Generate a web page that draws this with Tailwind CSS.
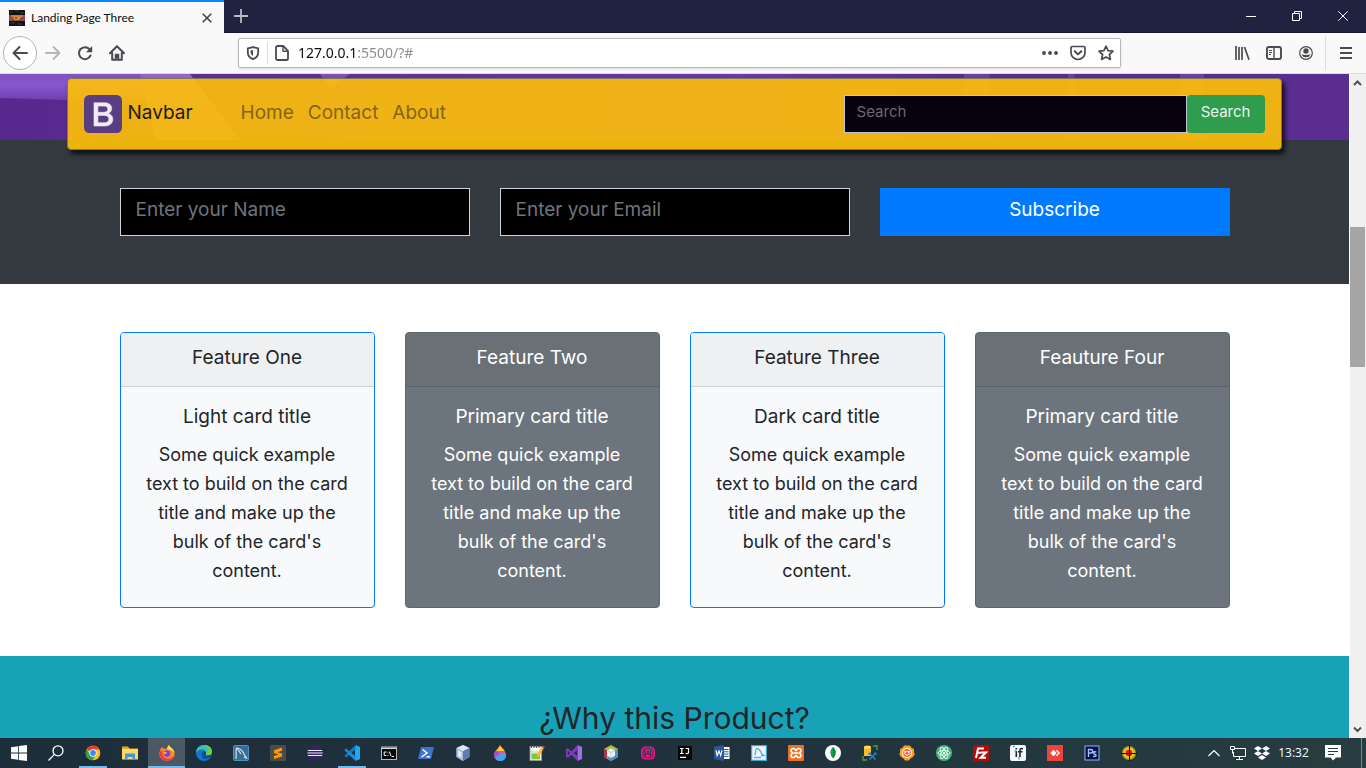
<!DOCTYPE html>
<html lang="en">
<head>
<meta charset="utf-8">
<meta name="viewport" content="width=device-width, initial-scale=1">
<title>Landing Page Three</title>
<script src="https://cdn.jsdelivr.net/npm/@tailwindcss/browser@4"></script>
</head>
<body class="h-screen flex flex-col overflow-hidden bg-white font-['Noto_Sans',sans-serif]">

<!-- Tab strip -->
<header class="shrink-0">
  <div class="h-[33px] flex bg-[#202340] border-b border-[#14162b]">
    <div class="w-[224px] h-[33px] flex items-center pl-[9px] pr-2 bg-[#f9f9fa] border-t-2 border-[#0a84ff]">
      <svg class="size-4 mr-[6px]" viewBox="0 0 16 16" aria-hidden="true"><rect width="16" height="16" fill="#151216"/><path d="M0 5h16v6H0z" fill="#8d4b4b"/><path d="M2 5h12v2H2z" fill="#b9776c"/><path d="M5 6h3l-1 2 3-2 2 1-2 3H6L4 8z" fill="#e58e1e"/><path d="M6 7l2 1-1 1z" fill="#2b1511"/><path d="M1 2h3M6 1h4M11 3h4M1 13h5M8 14h5" stroke="#3c3a3c"/></svg>
      <span class="grow text-xs font-['Lato',sans-serif] text-[#0c0c0d]">Landing Page Three</span>
      <button class="size-[18px] grid place-items-center" aria-label="Close tab"><svg class="size-[10px]" viewBox="0 0 10 10"><path d="M.7.7l8.6 8.6M9.3.7L.7 9.3" stroke="#3d3d42" stroke-width="1.5"/></svg></button>
    </div>
    <button class="w-[34px] grid place-items-center" aria-label="New tab"><svg class="size-[14px]" viewBox="0 0 14 14"><path d="M7 0v14M0 7h14" stroke="#b9bac6" stroke-width="1.8"/></svg></button>
    <div class="ml-auto flex">
      <button class="w-[46px] grid place-items-center" aria-label="Minimize"><svg class="size-[10px]" viewBox="0 0 10 10"><path d="M0 5.500h10" stroke="#fff"/></svg></button>
      <button class="w-[46px] grid place-items-center" aria-label="Restore"><svg class="size-[10px]" viewBox="0 0 10 10"><path d="M.5 2.500h7v7h-7zM2.500 2.500v-2h7v7h-2" fill="none" stroke="#fff"/></svg></button>
      <button class="w-[46px] grid place-items-center" aria-label="Close"><svg class="size-[10px]" viewBox="0 0 10 10"><path d="M.3.3l9.400 9.400M9.700.3L.3 9.700" stroke="#fff"/></svg></button>
    </div>
  </div>

  <!-- Toolbar -->
  <div class="h-[41px] flex items-center bg-[#f9f9fa] border-b border-[#dcdcdd] text-[#4a4a4f]">
    <button class="ml-[3px] size-[34px] rounded-full border border-[#b4b4b5] bg-white grid place-items-center" aria-label="Back"><svg class="size-4" viewBox="0 0 16 16" fill="none" stroke="currentColor" stroke-width="2" stroke-linecap="round" stroke-linejoin="round"><path d="M15 8H1.500M7.500 2l-6 6 6 6"/></svg></button>
    <button class="w-8 grid place-items-center text-[#b5b5b7]" aria-label="Forward"><svg class="size-4" viewBox="0 0 16 16" fill="none" stroke="currentColor" stroke-width="2" stroke-linecap="round" stroke-linejoin="round"><path d="M1 8h13.500M8.500 2l6 6-6 6"/></svg></button>
    <button class="w-8 grid place-items-center" aria-label="Reload"><svg class="size-4" viewBox="0 0 16 16" fill="none" stroke="currentColor" stroke-width="2" stroke-linecap="round"><path d="M13.500 10.500A6 6 0 1 1 12.500 4.200"/><path d="M15.200 1v6.200H9z" fill="currentColor" stroke="none"/></svg></button>
    <button class="w-8 grid place-items-center" aria-label="Home"><svg class="size-4" viewBox="0 0 16 16" fill="none" stroke="currentColor" stroke-width="2" stroke-linecap="round" stroke-linejoin="round"><path d="M1 8.200L8 1.300l7 6.900M3.200 8v6.800h9.600V8"/><path d="M6.500 14.500v-5h3v5M8 10v3" stroke-width="1.500"/></svg></button>
    <form class="ml-[105px] mr-[105px] grow h-[30px] flex items-center rounded-xs border border-[#b9b9ba] bg-white shadow-sm" onsubmit="return false">
      <span class="w-[29px] grid place-items-center border-r border-[#dcdcdd] h-[22px]"><svg class="size-[14px]" viewBox="0 0 14 14" fill="none" stroke="currentColor"><path d="M7 1.100L12.200 2.300v3.900c0 3.300-1.800 5.700-5.200 7C3.600 11.900 1.800 9.500 1.800 6.200V2.300z" stroke-width="1.800" stroke-linejoin="round"/><path d="M7 4v6C5.400 9 4.600 7.600 4.600 6V4.400z" fill="currentColor" stroke="none"/></svg></span>
      <svg class="ml-[6px] size-4" viewBox="0 0 16 16" fill="none" stroke="currentColor" stroke-width="1.800" stroke-linejoin="round"><path d="M3.800 1h5.400l4.800 4.800v7.500c0 1-.7 1.700-1.700 1.700H3.700C2.700 15 2 14.300 2 13.300V2.700C2 1.700 2.700 1 3.800 1z"/><path d="M9 1.200v5h4.800" stroke-width="1.400"/></svg>
      <input type="text" aria-label="Address" value="127.0.0.1:5500/?#" class="grow min-w-0 ml-2 text-sm outline-none text-transparent bg-clip-text bg-[linear-gradient(90deg,#0c0c0d_58px,#8a8a8d_58px)]">
      <div class="flex items-center gap-3 pr-[6px]">
        <button aria-label="Page actions"><svg class="size-4" viewBox="0 0 16 16" fill="currentColor"><circle cx="2" cy="8" r="1.900"/><circle cx="8" cy="8" r="1.900"/><circle cx="14" cy="8" r="1.900"/></svg></button>
        <button aria-label="Save to Pocket"><svg class="size-4" viewBox="0 0 16 16" fill="none" stroke="currentColor" stroke-width="2" stroke-linecap="round" stroke-linejoin="round"><path d="M2.300 1.500h11.400c.8 0 1.300.5 1.300 1.300V7.500a7 7 0 0 1-14 0V2.800c0-.8.5-1.300 1.300-1.300z" stroke-width="1.700"/><path d="M4.700 6.200L8 9.400l3.300-3.200"/></svg></button>
        <button aria-label="Bookmark this page"><svg class="size-4" viewBox="0 0 16 16" fill="none" stroke="currentColor" stroke-width="1.700" stroke-linejoin="round"><path d="M8 1.200l2.100 4.400 4.900.6-3.600 3.300 1 4.900L8 12l-4.400 2.400 1-4.900L1 6.200l4.900-.6z"/></svg></button>
      </div>
    </form>
    <button class="w-8 grid place-items-center" aria-label="Library"><svg class="size-4" viewBox="0 0 16 16" stroke="currentColor" stroke-width="1.700"><path d="M2 1v14M5 2v13M8 2v13M10.500 2L15 14.700"/></svg></button>
    <button class="w-8 grid place-items-center" aria-label="Sidebars"><svg class="size-4" viewBox="0 0 16 16" fill="none" stroke="currentColor"><rect x="1" y="2" width="14" height="12" rx="2" stroke-width="1.900"/><path d="M8 2v12" stroke-width="1.400"/><path d="M3 5.500h3M3 7.500h3M3 9.500h2"/></svg></button>
    <button class="w-8 grid place-items-center" aria-label="Account"><svg class="size-4" viewBox="0 0 16 16"><circle cx="8" cy="8" r="6.300" fill="none" stroke="currentColor" stroke-width="1.200"/><circle cx="8" cy="6" r="2.700" fill="currentColor"/><path d="M3.500 9.500c1.500-.4 2 .6 4.500.6s3-1 4.500-.6A5 5 0 0 1 3.500 9.500z" fill="currentColor"/></svg></button>
    <div class="ml-[3px] w-px h-[34px] bg-[#dcdcdd]"></div>
    <button class="w-10 grid place-items-center" aria-label="Menu"><svg class="w-3 h-4" viewBox="0 0 12 16" stroke="currentColor" stroke-width="2"><path d="M0 3h12M0 8h12M0 13h12"/></svg></button>
  </div>
</header>

<div class="grow min-h-0 flex">
  <!-- Page -->
  <main class="grow min-w-0 relative overflow-hidden font-['Inter',sans-serif] text-[#212529] text-lg leading-[29px]">
    <div class="h-[66px] bg-[#5c2d91] overflow-hidden" aria-hidden="true">
      <svg class="w-full h-full" viewBox="0 0 1349 66" preserveAspectRatio="none">
        <defs><linearGradient id="sheen" x1="0" y1="0" x2="0" y2="1"><stop offset="0" stop-color="#8450bf"/><stop offset=".35" stop-color="#8458cd"/><stop offset="1" stop-color="#6b3aa6"/></linearGradient>
        <linearGradient id="base" x1="0" x2="1" y1="0" y2="0"><stop offset="0" stop-color="#59288e"/><stop offset=".55" stop-color="#6a38a8"/><stop offset=".7" stop-color="#5c2d91"/><stop offset="1" stop-color="#5c2d91"/></linearGradient></defs>
        <rect width="1349" height="66" fill="url(#base)"/>
        <path d="M0 0h190l20 30L0 24z" fill="url(#sheen)"/>
        <path d="M140 0h50l50 66h-85z" fill="#a070d2" opacity=".6"/>
        <path d="M964 0h25l4 66h-30zM1068 0h7v66h-7zM1180 0h24v66h-24z" fill="#7d50c4" opacity=".5"/>
        <path d="M320 0h30l-20 14z" fill="#a070d2" opacity=".5"/>
      </svg>
    </div>

    <nav class="absolute z-10 top-1 inset-x-[5%] flex items-center px-4 py-4 rounded-sm border border-[#7c7758] bg-[#ffc107]/90 shadow-[3px_4px_5px_rgba(0,0,0,0.75)]">
      <a href="#" class="flex items-center gap-[5px] text-[19px] text-[#1e1a0c]">
        <svg class="size-[38px]" viewBox="0 0 38 38" aria-hidden="true"><rect width="38" height="38" rx="5.500" fill="#5a3e82"/><path fill-rule="evenodd" fill="#f2ebf6" stroke="#f2ebf6" stroke-width=".6" d="M10 7.800h10.800c4.300 0 6.900 2.200 6.900 5.800 0 2.500-1.600 4.300-3.600 4.900 2.700.5 4.700 2.700 4.700 5.600 0 4.300-3 6.900-8 6.900H10zm3.900 3.300v6.200h5.300c3 0 4.600-1.100 4.600-3.200 0-1.900-1.300-3-3.800-3zm0 9.300v7.300h6.400c3 0 4.600-1.300 4.600-3.700s-1.700-3.600-4.900-3.600z"/></svg>
        <span class="pb-1">Navbar</span>
      </a>
      <div class="ml-12 pb-1 flex gap-[14px] text-[19px] text-[#846512]">
        <a href="#">Home</a><a href="#">Contact</a><a href="#">About</a>
      </div>
      <form class="ml-auto flex w-[421px] text-[15px]" onsubmit="return false">
        <input type="search" aria-label="Search" placeholder="Search" class="grow min-w-0 h-[38px] px-3 pb-[5px] bg-[#08020e] border border-[#c4c3d0] text-gray-300 placeholder:text-[#686974] outline-none">
        <button class="h-[38px] w-[78px] pb-[5px] rounded-sm bg-[#2f9c4e] text-[#eef4ee]">Search</button>
      </form>
    </nav>

    <section class="bg-[#343a40] py-12 px-4">
      <form class="max-w-[1110px] mx-auto grid grid-cols-3 gap-[30px] text-[19px]" onsubmit="return false">
        <input type="text" aria-label="Enter your Name" placeholder="Enter your Name" class="min-w-0 h-12 px-[15px] pb-[5px] bg-black border border-[#ced4da] text-white placeholder:text-[#6c757d] outline-none">
        <input type="email" aria-label="Enter your Email" placeholder="Enter your Email" class="min-w-0 h-12 px-[15px] pb-[5px] bg-black border border-[#ced4da] text-white placeholder:text-[#6c757d] outline-none">
        <button class="h-12 pb-[5px] bg-[#007bff] text-white">Subscribe</button>
      </form>
    </section>

    <section class="bg-white py-12 px-4">
      <div class="max-w-[1110px] mx-auto grid grid-cols-4 gap-[30px] text-center">
        <article class="rounded-sm border border-[#007bff] bg-[#f8f9fa] overflow-hidden">
          <h4 class="pt-[10px] pb-[14px] text-[19px] bg-[#eff0f1] border-b border-[#cfd0d1]">Feature One</h4>
          <div class="px-5 pt-[18px] pb-[22px]"><h5 class="mb-3 text-[19px] leading-[23px]">Light card title</h5><p>Some quick example text to build on the card title and make up the bulk of the card's content.</p></div>
        </article>
        <article class="rounded-sm border border-[#5f676e] bg-[#6c757d] text-white overflow-hidden">
          <h4 class="pt-[10px] pb-[14px] text-[19px] bg-[#697177] border-b border-[#5b6268]">Feature Two</h4>
          <div class="px-5 pt-[18px] pb-[22px]"><h5 class="mb-3 text-[19px] leading-[23px]">Primary card title</h5><p>Some quick example text to build on the card title and make up the bulk of the card's content.</p></div>
        </article>
        <article class="rounded-sm border border-[#007bff] bg-[#f8f9fa] overflow-hidden">
          <h4 class="pt-[10px] pb-[14px] text-[19px] bg-[#eff0f1] border-b border-[#cfd0d1]">Feature Three</h4>
          <div class="px-5 pt-[18px] pb-[22px]"><h5 class="mb-3 text-[19px] leading-[23px]">Dark card title</h5><p>Some quick example text to build on the card title and make up the bulk of the card's content.</p></div>
        </article>
        <article class="rounded-sm border border-[#5f676e] bg-[#6c757d] text-white overflow-hidden">
          <h4 class="pt-[10px] pb-[14px] text-[19px] bg-[#697177] border-b border-[#5b6268]">Feauture Four</h4>
          <div class="px-5 pt-[18px] pb-[22px]"><h5 class="mb-3 text-[19px] leading-[23px]">Primary card title</h5><p>Some quick example text to build on the card title and make up the bulk of the card's content.</p></div>
        </article>
      </div>
    </section>

    <section class="bg-[#17a2b8] pt-[42px] pb-12 px-4 text-center">
      <h2 class="text-[30px] leading-10">¿Why this Product?</h2>
    </section>
  </main>

  <!-- Scroll bar -->
  <div class="w-[17px] shrink-0 flex flex-col bg-[#f0f0f0] border-l border-white" aria-hidden="true">
    <svg class="w-4 h-[17px] shrink-0" viewBox="0 0 16 17" fill="none" stroke="#505050" stroke-width="2"><path d="M4 11l3.500-3.500L11 11"/></svg>
    <div class="grow-[136]"></div>
    <div class="w-[15px] h-[140px] bg-[#a6a6a6]"></div>
    <div class="grow-[354]"></div>
    <svg class="w-4 h-[17px] shrink-0" viewBox="0 0 16 17" fill="none" stroke="#505050" stroke-width="2"><path d="M4 6.500L7.500 10 11 6.500"/></svg>
  </div>
</div>

<!-- Taskbar -->
<footer class="h-[30px] shrink-0 flex bg-linear-to-r from-[#1d2e3b] via-[#20323c] to-[#273d42] text-white">
  <div class="flex *:w-[37px] *:grid *:place-items-center *:shrink-0">
    <button aria-label="Start"><svg class="size-4" viewBox="0 0 16 16" fill="#fff"><path d="M0 2.200L7 1.200v6.400H0zM7.800 1.100L16 0v7.600H7.800zM0 8.400h7v6.400l-7-1zM7.800 8.400H16V16l-8.200-1.100z"/></svg></button>
    <button aria-label="Find"><svg class="size-4" viewBox="0 0 16 16" fill="none" stroke="#fff" stroke-width="1.300"><circle cx="10" cy="5.800" r="5"/><path d="M6.400 9.400L.5 15.500"/></svg></button>
    <button aria-label="Chrome" class="bg-[linear-gradient(#76b9ed,#76b9ed)] bg-[length:28px_2px] bg-no-repeat bg-bottom"><svg class="size-4" viewBox="0 0 16 16"><circle cx="8" cy="8" r="7.300" fill="#fbc116"/><path d="M8 8L1.700 4.300A7.300 7.300 0 0 1 14.500 4.500H8z" fill="#e04335"/><path d="M1.700 4.300A7.300 7.300 0 0 0 7.500 15.300L11 9.800 5 9.800z" fill="#2da14c"/><circle cx="8" cy="8" r="3.700" fill="#fff"/><circle cx="8" cy="8" r="2.900" fill="#4285f4"/></svg></button>
    <button aria-label="Files"><svg class="size-4" viewBox="0 0 16 16"><path d="M0 1.500h6l1.500 2H16V14H0z" fill="#e9a81d"/><path d="M0 4h16v10.500H0z" fill="#ffd766"/><path d="M3 8.500h10V15h-2.500v-3h-5v3H3z" fill="#3f97dc"/></svg></button>
    <button aria-label="Firefox" class="bg-[#4a5963] border-b-2 border-[#76b9ed]"><svg class="size-4 mt-0.5" viewBox="0 0 16 16"><path d="M3 2l2 2c1-.5 2-.5 3-.2.3-1.600 1-2.800 2-3.800 1 2.500 4.700 3.600 5.500 7.500.8 4.500-2.500 8.300-7.300 8.300C3.500 15.800.3 12.500.4 8.500.5 6 1.500 3.500 3 2z" fill="#ff8a1e"/><path d="M.5 8C1 13 4 15.800 8.200 15.800c3.600 0 6-2 7-4.800-2 2-4.200 3-7.200 2.500C4.500 13 2.500 10 3.500 5 2 5.500.8 6.500.5 8z" fill="#f4364c"/><path d="M10 0c1 2.500 4.700 3.600 5.500 7.500-1.200-1-2.500-2.500-5.500-2.700L8 4C8.300 2.300 9 1 10 0z" fill="#ffdd3f"/><circle cx="8" cy="8.500" r="3.300" fill="#7542e5"/><path d="M4 7.500c1.500-1 3-1 4 .2L6 9.500z" fill="#ffb12b"/></svg></button>
    <button aria-label="Edge"><svg class="size-4" viewBox="0 0 16 16"><circle cx="8" cy="8" r="8" fill="#1277cf"/><path d="M0 7C.5 3 4 0 8 0c4.500 0 8 3 8 6.500 0 2.500-2 4-4.500 4-1.500 0-2.300-.6-1.800-1.300C11 7 9 4.500 6 4.500 3 4.500.8 6 0 8z" fill="#35c1b5"/><path d="M9 .1C13 .5 16 3.200 16 6.500c0 2.500-2 4-4.500 4-1.500 0-2.300-.6-1.800-1.300C13 6 12 3 9 .1z" fill="#63cf55"/><path d="M5.500 9.500c0-2 1.500-3.300 3-3.300C6.500 8 7.500 12.800 14.800 12 11 15.500 5.500 14 5.500 9.500z" fill="#0c4f9b"/><path d="M8.300 6.300C7 9 9 12.300 14.800 11.800L16 9.500c-1 .8-3 1.300-4.500 1-1.500 0-2.300-.6-1.800-1.300.5-1-.2-2.300-1.400-2.900z" fill="#1f3340"/></svg></button>
    <button aria-label="MySQL Workbench"><svg class="size-4" viewBox="0 0 16 16"><rect x=".5" y=".5" width="15" height="15" rx="1" fill="#376e97" stroke="#5990b5"/><path d="M3 14C3.500 9 2.500 5 3.500 3c4 0 7 4 8 7l2.500 3.500-3-1.500M4 3l4 6" fill="none" stroke="#d4e6f1" stroke-width="1.200"/></svg></button>
    <button aria-label="Sublime Text"><svg class="size-4" viewBox="0 0 16 16"><rect width="16" height="16" rx="1" fill="#4b4b4b"/><path d="M4 5.200L12 2.500v3.200L7.500 7.300 12 8.600v2.800L4 14v-3l4.500-1.600L4 8z" fill="#ff9800"/></svg></button>
    <button aria-label="Eclipse"><svg class="size-4" viewBox="0 0 16 16"><circle cx="8" cy="8" r="7.700" fill="#33265d"/><path d="M.8 5.500h14.400M.3 8h15.400M.8 10.500h14.400" stroke="#efeaf7"/></svg></button>
    <button aria-label="Visual Studio Code" class="bg-[linear-gradient(#76b9ed,#76b9ed)] bg-[length:28px_2px] bg-no-repeat bg-bottom"><svg class="size-4" viewBox="0 0 16 16"><path d="M11.500 0L16 2v12l-4.500 2-.5-4V4z" fill="#2aa4f0"/><path d="M11.500 0v4.500L2 12.500.3 11z" fill="#0d7dc9"/><path d="M11.500 16v-4.500L2 3.500.3 5z" fill="#1590dc"/></svg></button>
    <button aria-label="Command prompt"><svg class="size-4" viewBox="0 0 16 16"><rect x=".5" y="2" width="15" height="12.500" fill="#050505" stroke="#b7b7b7"/><path d="M1 3.300h14" stroke="#d8d8d8" stroke-width="1.500"/><path d="M5.500 7H3.200v3.500h2.300M7 7.500v.8M7 10v.8M8.300 6.500l1.700 4.500M10.500 11.500H13" stroke="#fff" fill="none"/></svg></button>
    <button aria-label="PowerShell"><svg class="size-4" viewBox="0 0 16 16"><path d="M3 2h13l-3 12H0z" fill="#3d72cd"/><path d="M4.500 4.500L9 8l-5.500 4M8.500 11.800H12" fill="none" stroke="#fff" stroke-width="1.500"/></svg></button>
    <button aria-label="VirtualBox"><svg class="size-4" viewBox="0 0 16 16"><path d="M8 0l6.500 3v9L8 16l-6.500-4V3z" fill="#7c9fc9"/><path d="M8 0l6.500 3L8 6.200 1.500 3z" fill="#dbe7f4"/><path d="M1.500 3L8 6.200V16l-6.500-4z" fill="#a9c0de"/><path d="M8 6.200L14.500 3v9L8 16z" fill="#5e7eb0"/><path d="M3 5.500l3.500 1.700v5.500L3 11z" fill="#e3ecf7"/></svg></button>
    <button aria-label="Krita"><svg class="size-4" viewBox="0 0 16 16"><path d="M8 0c1 2.500 6 6 6 10a6 6 0 0 1-12 0C2 6 7 3 8 0z" fill="#ef4e9a"/><path d="M8 0c.7 2 3 3.500 4.800 6L4 6C5.500 4 7.500 2 8 0z" fill="#ffc928"/><path d="M4 9c3-2 6 1 9.900-.8C15 15 10 16 8 16c-2 0-4-1-5.200-3C5 13 6 11 4 9z" fill="#3ca8ea"/><path d="M3 6.800c4-1 6 2 3 3.500s-1 3-3 3C1.600 11.500 1.800 9 3 6.800z" fill="#a24ed0"/></svg></button>
    <button aria-label="Notepad++"><svg class="size-4" viewBox="0 0 16 16"><rect x="1" y="1.500" width="11.500" height="14" fill="#f6f6f2" stroke="#979797" stroke-width=".8"/><path d="M2.500 6h8.500v8.300H2.500z" fill="#7ec63a"/><path d="M2.500 6h8.500v2.500H2.500z" fill="#ddecc8"/><path d="M2.500 0v3M5 0v3M7.500 0v3M10 0v3" stroke="#444" stroke-width=".9"/><path d="M14 2l-5.500 9.500" stroke="#f4b82a" stroke-width="2.500"/><path d="M14 .5l2 1.300-1 1.500-2-1.200z" fill="#d13c34"/></svg></button>
    <button aria-label="Visual Studio"><svg class="size-4" viewBox="0 0 16 16"><path d="M11.500 0L16 2v12l-4.500 2z" fill="#a96bdf"/><path d="M0 4l1.800-.8L11.500 11v5L1.800 5.800v4.400L11.500 0v5L1.800 12.800 0 12z" fill="#7a3cbc" fill-rule="nonzero"/></svg></button>
    <button aria-label="NetBeans"><svg class="size-4" viewBox="0 0 16 16"><path d="M8 0l7 4v8l-7 4-7-4V4z" fill="#a8c441"/><path d="M1 4l3 1v8.500L1 12z" fill="#b5324e"/><path d="M15 4v8l-7 4-4-2.500L12 5z" fill="#4a93cf"/><path d="M8 3.500L12 5.500v5L8 13l-4-2.500v-5z" fill="#f3f6f5"/><path d="M4 5.500l4 2 4-2M8 7.500V13" stroke="#b9cbd3" fill="none"/></svg></button>
    <button aria-label="WampServer"><svg class="size-4" viewBox="0 0 16 16"><rect x="1" y="1.500" width="14" height="13" rx="4.500" fill="#f0128a"/><rect x="3" y="3.300" width="10" height="9.400" rx="3" fill="none" stroke="#243641" stroke-width=".9"/><path d="M5 5v5.500L7.800 8l2.700 2.500V5M8 5v3" stroke="#243641" stroke-width="1.200" fill="none"/></svg></button>
    <button aria-label="IntelliJ IDEA"><svg class="size-4" viewBox="0 0 16 16"><path d="M1 1h14v14H1z" fill="#090909"/><path d="M3 3.500h3.500M4.800 3.500v5M3 8.500h3.500M8.500 3.500h3v4c0 1-1.500 1.500-3 .8M3 12.300h6" stroke="#fff" stroke-width="1.200" fill="none"/></svg></button>
    <button aria-label="Word"><svg class="size-4" viewBox="0 0 16 16"><path d="M8 2h7.500v12H8z" fill="#fff"/><path d="M10 4.500h4.500M10 6.800h4.500M10 9.100h4.500M10 11.400h4.500" stroke="#2b579a"/><path d="M0 1.800L10 0v16L0 14.200z" fill="#2b579a"/><path d="M2 5.300l1.200 5.200L5 6l1.700 4.500L8 5.300" stroke="#fff" stroke-width="1.200" fill="none"/></svg></button>
    <button aria-label="MySQL"><svg class="size-4" viewBox="0 0 16 16"><rect x=".6" y=".6" width="14.800" height="14.800" fill="#eef6fa" stroke="#46a5d8" stroke-width="1.200"/><path d="M4 10C5 7 4 5 5.500 3.500c3 .5 4.500 3 5 5l2.500 2-3 .3M3 12.500h7" stroke="#6eaed2" fill="none" stroke-width="1.400"/></svg></button>
    <button aria-label="XAMPP"><svg class="size-4" viewBox="0 0 16 16"><rect width="16" height="16" rx="1" fill="#ee7023"/><path d="M5 3.500h1L8 5.500l2-2h1a2 2 0 0 1 1.500 3.300L11.500 8l1 1.200a2 2 0 0 1-1.500 3.300h-1l-2-2-2 2H5a2 2 0 0 1-1.500-3.300L4.500 8l-1-1.200A2 2 0 0 1 5 3.500zM5.500 8h5" fill="none" stroke="#fff" stroke-width="1.700"/></svg></button>
    <button aria-label="MongoDB"><svg class="size-4" viewBox="0 0 16 16"><circle cx="8" cy="8" r="8" fill="#fff"/><path d="M8 2c3.500 3.500 3.500 7.500 0 11.500C4.500 9.500 4.500 5.500 8 2z" fill="#12a150"/><path d="M8 2c3.500 3.500 3.500 7.500 0 11.500z" fill="#0b8740"/></svg></button>
    <button aria-label="Database tools"><svg class="size-4" viewBox="0 0 16 16"><path d="M2 2h7v9H2z" fill="#f7bd2b"/><ellipse cx="5.500" cy="2" rx="3.500" ry="1.500" fill="#ffd968"/><path d="M11 1h4v4M1 11v4h4" stroke="#46a546" stroke-width="1.300" fill="none"/><path d="M7.500 8.500l6 6M13.500 8.500l-6 6M6.500 9.500l2-2M12.500 7.500l2 2" stroke="#2583cf" stroke-width="1.500"/></svg></button>
    <button aria-label="Settings tool"><svg class="size-4" viewBox="0 0 16 16"><path d="M5 .5h6l1.500 2.300L15 4v3.500l.8 1.500-1.800 3-2.500 1.500L10 15.500H6L4.500 13.500 2 12 .2 9 1 7.500V4l2.500-1.200z" fill="#f5a01f"/><circle cx="8" cy="8" r="4.900" fill="#fff"/><circle cx="8" cy="8" r="3.900" fill="#ef6326"/><path d="M5.200 5.500L8 6.500l2.800-1-.5 4L8 11 5.700 9.500z" fill="#fff"/><circle cx="8" cy="8.300" r="1.500" fill="#ef6326"/></svg></button>
    <button aria-label="Atom"><svg class="size-4" viewBox="0 0 16 16"><circle cx="8" cy="8" r="8" fill="#45b27b"/><g fill="none" stroke="#e5f7ec" stroke-width="1"><ellipse cx="8" cy="8" rx="6" ry="2.400"/><ellipse cx="8" cy="8" rx="6" ry="2.400" transform="rotate(60 8 8)"/><ellipse cx="8" cy="8" rx="6" ry="2.400" transform="rotate(120 8 8)"/></g><circle cx="8" cy="8" r="1.200" fill="#fff"/></svg></button>
    <button aria-label="FileZilla"><svg class="size-4" viewBox="0 0 16 16"><rect width="16" height="16" fill="#b50a0a"/><path d="M3 13L5 3.500h6M4.200 7.800H8M8 7.500h5l-5.500 5.300H13" fill="none" stroke="#fff" stroke-width="2"/></svg></button>
    <button aria-label="Installer"><svg class="size-4" viewBox="0 0 16 16"><rect width="16" height="16" rx="2" fill="#f6f8f9"/><path d="M6.300 6v6M6.300 3v1.500M13 3.800c-2-.8-3 0-3 1.700V12M8 6.800h4.500" stroke="#23282c" stroke-width="1.600" fill="none"/><path d="M4.500 6h2M9 12v2.500M3 1.500h2" stroke="#39a9df" stroke-width="1.400"/></svg></button>
    <button aria-label="AnyDesk"><svg class="size-4" viewBox="0 0 16 16"><rect width="16" height="16" fill="#ef443b"/><path d="M6.500 4.800L9.700 8l-3.200 3.200L3.300 8z" fill="#fff"/><path d="M9.300 5.200L12.200 8l-2.900 2.800" fill="none" stroke="#fff" stroke-width="1.200"/></svg></button>
    <button aria-label="Photoshop"><svg class="size-4" viewBox="0 0 16 16"><rect x="1" y="1" width="14" height="14" fill="#0b0c4d" stroke="#8fb5e8"/><path d="M4.500 12V4.500h2.300c2.500 0 2.500 3.500 0 3.500H4.500M12.300 7c-3.500-.8-3.500 1.700-1.500 2.200 2.300.5 1.300 3-1.800 2" fill="none" stroke="#9fc4f2" stroke-width="1.400"/></svg></button>
    <button aria-label="Target tool"><svg class="size-4" viewBox="0 0 16 16"><circle cx="8" cy="8" r="7" fill="#9fa51b"/><circle cx="8" cy="8" r="5.700" fill="#f1c412"/><circle cx="8" cy="8" r="3.300" fill="#e3200f"/><path d="M8.500 0v16M0 8.500h16" stroke="#080808"/></svg></button>
  </div>
  <div class="ml-auto flex items-center">
    <button class="w-6 grid place-items-center" aria-label="Hidden icons"><svg class="w-3 h-2" viewBox="0 0 12 8" fill="none" stroke="#fff" stroke-width="1.200"><path d="M.5 7L6 1.500 11.500 7"/></svg></button>
    <button class="w-6 grid place-items-center" aria-label="Network"><svg class="size-4" viewBox="0 0 16 16" fill="none" stroke="#fff"><path d="M4.500 3.500h11v8h-12V7M9.500 11.500v3M6 14.500h7M.5 1.500h4v3h-4zM2.500 4.500v4"/></svg></button>
    <button class="w-6 grid place-items-center" aria-label="Dropbox"><svg class="size-4" viewBox="0 0 16 16" fill="#fff"><path d="M4 1l4 2.500L4 6 0 3.500zM12 1l4 2.500L12 6 8 3.500zM4 6l4 2.500L4 11 0 8.500zM12 6l4 2.500L12 11 8 8.500zM8 10l4 2.500L8 15l-4-2.500z"/></svg></button>
    <span class="w-[39px] text-center text-xs font-['Open_Sans',sans-serif]">13:32</span>
    <button class="w-[39px] grid place-items-center" aria-label="Notifications"><svg class="size-4" viewBox="0 0 16 16"><path d="M0 0h16v12.500h-5L8 15.500l-2.500-3H0z" fill="#fff"/><path d="M3 3.500h10M3 6.500h10M3 9.500h6" stroke="#273d42"/></svg></button>
    <div class="ml-[9px] mr-1 w-px h-[30px] bg-[#7c898d]"></div>
  </div>
</footer>
</body>
</html>
